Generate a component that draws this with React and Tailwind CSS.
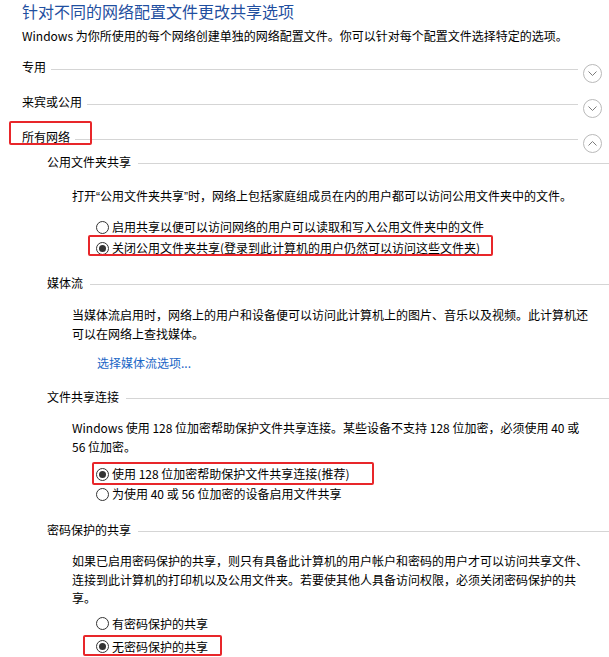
import React from "react";

const Chevron = ({ up }) => (
  <svg width="19" height="19" viewBox="0 0 19 19" className="shrink-0 translate-y-[6px]">
    <circle cx="9.5" cy="9.5" r="9" fill="white" stroke="#b9b9b9" />
    <path
      d={up ? "M5.5 11.5 L9.5 7.5 L13.5 11.5" : "M5.5 7.5 L9.5 11.5 L13.5 7.5"}
      fill="none"
      stroke="#7c7c7c"
      strokeWidth="1"
    />
  </svg>
);

const Section = ({ title, up, className, children }) => (
  <div className={"relative flex h-[20px] items-center pr-[7px] " + className}>
    <span className="leading-[20px]">{title}</span>
    <div className="mx-[5px] h-px flex-1 translate-y-[2px] bg-[#d5d5d5]" />
    <Chevron up={up} />
    {children}
  </div>
);

const SubHead = ({ title, className }) => (
  <div className={"flex h-[20px] items-center pl-[25px] " + className}>
    <span className="leading-[20px]">{title}</span>
    <div className="ml-[7px] h-px flex-1 translate-y-[1px] bg-[#d5d5d5]" />
  </div>
);

const Radio = ({ checked, label, className, children }) => (
  <div className={"relative flex h-[20px] items-center gap-[3px] " + className}>
    <span className="flex h-[13px] w-[13px] shrink-0 items-center justify-center rounded-full border border-[#333333] bg-white">
      {checked && <span className="h-[7px] w-[7px] rounded-full bg-[#333333]" />}
    </span>
    <span className="whitespace-nowrap leading-[20px]">{label}</span>
    {children}
  </div>
);

const Mark = ({ className }) => (
  <span className={"pointer-events-none absolute rounded-[2px] border-2 border-[#e8262a] " + className} />
);

const Q = ({ children }) => <span className="font-['Liberation_Sans',sans-serif]">{children}</span>;

export default function App() {
  return (
    <div className="min-h-screen bg-white pl-[22px] font-['Noto_Sans_CJK_SC','Noto_Sans',sans-serif] text-[12px] text-black">
      <h1 className="text-[16px] leading-[22px] text-[#1f4fa0]">针对不同的网络配置文件更改共享选项</h1>
      <p className="mt-[4px] leading-[20px]">
        Windows 为你所使用的每个网络创建单独的网络配置文件。你可以针对每个配置文件选择特定的选项。
      </p>

      <Section title="专用" className="mt-[11px]" />
      <Section title="来宾或公用" className="mt-[15px]" />
      <Section title="所有网络" up className="mt-[15px]">
        <Mark className="left-[-13px] top-[-6px] h-[24px] w-[83px]" />
      </Section>

      <SubHead title="公用文件夹共享" className="mt-[5px]" />
      <div className="mt-[14px] whitespace-nowrap pl-[50px] leading-[19px]">
        打开<Q>“</Q>公用文件夹共享<Q>”</Q>时，网络上包括家庭组成员在内的用户都可以访问公用文件夹中的文件。
      </div>
      <div className="mt-[10px] pl-[74px]">
        <Radio label="启用共享以便可以访问网络的用户可以读取和写入公用文件夹中的文件" />
        <Radio checked label="关闭公用文件夹共享(登录到此计算机的用户仍然可以访问这些文件夹)" className="mt-[1px]">
          <Mark className="left-[-8px] top-[-3px] h-[21px] w-[405px]" />
        </Radio>
      </div>

      <SubHead title="媒体流" className="mt-[15px]" />
      <div className="mt-[13px] pl-[50px] leading-[18.5px]">
        <div className="whitespace-nowrap">当媒体流启用时，网络上的用户和设备便可以访问此计算机上的图片、音乐以及视频。此计算机还</div>
        <div className="whitespace-nowrap">可以在网络上查找媒体。</div>
      </div>
      <div className="mt-[10px] pl-[75px] leading-[20px]">
        <a className="text-[#1a66c6]">选择媒体流选项...</a>
      </div>

      <SubHead title="文件共享连接" className="mt-[14px]" />
      <div className="mt-[12px] pl-[50px] leading-[18.5px]">
        <div className="whitespace-nowrap">Windows 使用 128 位加密帮助保护文件共享连接。某些设备不支持 128 位加密，必须使用 40 或</div>
        <div className="whitespace-nowrap">56 位加密。</div>
      </div>
      <div className="mt-[8px] pl-[74px]">
        <Radio checked label="使用 128 位加密帮助保护文件共享连接(推荐)">
          <Mark className="left-[-4px] top-[-2px] h-[23px] w-[282px]" />
        </Radio>
        <Radio label="为使用 40 或 56 位加密的设备启用文件共享" />
      </div>

      <SubHead title="密码保护的共享" className="mt-[16px]" />
      <div className="mt-[12px] pl-[50px] leading-[18.5px]">
        <div className="whitespace-nowrap">如果已启用密码保护的共享，则只有具备此计算机的用户帐户和密码的用户才可以访问共享文件、</div>
        <div className="whitespace-nowrap">连接到此计算机的打印机以及公用文件夹。若要使其他人具备访问权限，必须关闭密码保护的共</div>
        <div className="whitespace-nowrap">享。</div>
      </div>
      <div className="mt-[6px] pl-[74px]">
        <Radio label="有密码保护的共享" />
        <Radio checked label="无密码保护的共享" className="mt-[3px]">
          <Mark className="left-[-13px] top-[-2px] h-[21px] w-[139px]" />
        </Radio>
      </div>
    </div>
  );
}
